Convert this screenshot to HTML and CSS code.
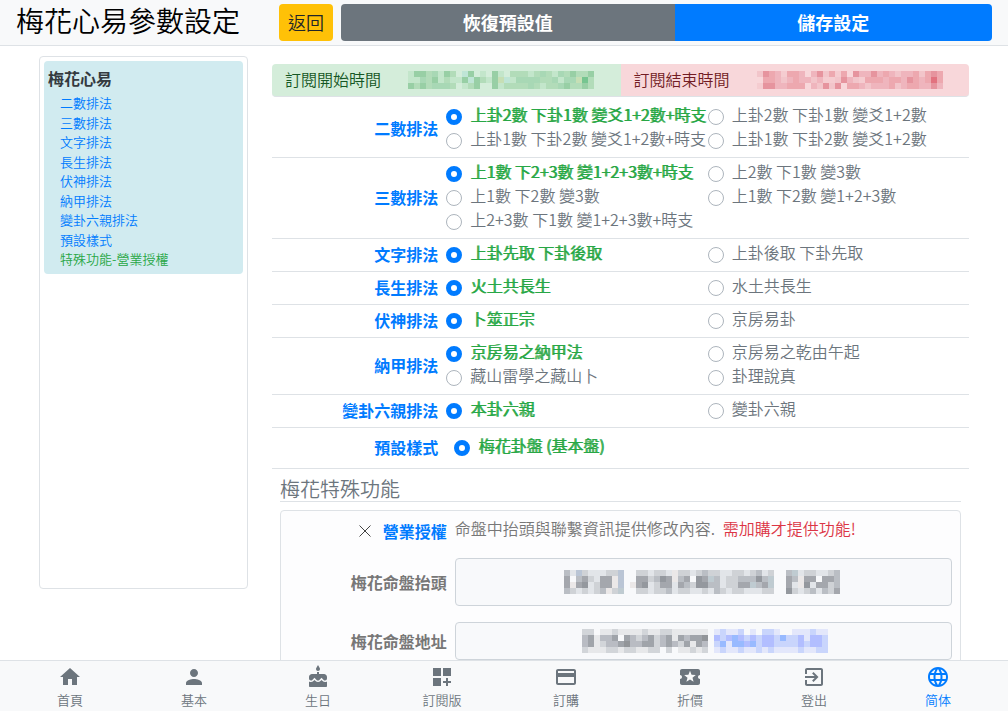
FILE: index.html
```html
<!DOCTYPE html>
<html lang="zh-Hant">
<head>
<meta charset="utf-8">
<meta name="viewport" content="width=device-width, initial-scale=1">
<title>梅花心易參數設定</title>
<link rel="stylesheet" href="styles.css">
</head>
<body>
<header class="topbar">
  <h1 class="topbar-title">梅花心易參數設定</h1>
  <button class="btn btn-back" type="button">返回</button>
  <div class="btn-group">
    <button class="btn btn-reset" type="button">恢復預設值</button>
    <button class="btn btn-save" type="submit" form="settings">儲存設定</button>
  </div>
</header>

<div class="page">
  <aside class="sidebar">
    <nav class="toc" aria-label="梅花心易">
      <h2 class="toc-title">梅花心易</h2>
      <a class="toc-link" href="#two">二數排法</a>
      <a class="toc-link" href="#three">三數排法</a>
      <a class="toc-link" href="#text">文字排法</a>
      <a class="toc-link" href="#growth">長生排法</a>
      <a class="toc-link" href="#hidden">伏神排法</a>
      <a class="toc-link" href="#najia">納甲排法</a>
      <a class="toc-link" href="#kin">變卦六親排法</a>
      <a class="toc-link" href="#style">預設樣式</a>
      <a class="toc-link toc-special" href="#special">特殊功能-營業授權</a>
    </nav>
  </aside>

  <main class="content">
    <div class="period">
      <div class="period-cell period-start"><span>訂閱開始時間</span><svg class="mosaic" data-mosaic="start"></svg></div>
      <div class="period-cell period-end"><span>訂閱結束時間</span><svg class="mosaic" data-mosaic="end"></svg></div>
    </div>

    <form id="settings">
      <fieldset class="row" id="two" aria-labelledby="two-l">
        <div class="row-label" id="two-l">二數排法</div>
        <div class="options">
          <label class="option"><input type="radio" name="two" checked><span>上卦2數 下卦1數 變爻1+2數+時支</span></label>
          <label class="option"><input type="radio" name="two"><span>上卦2數 下卦1數 變爻1+2數</span></label>
          <label class="option"><input type="radio" name="two"><span>上卦1數 下卦2數 變爻1+2數+時支</span></label>
          <label class="option"><input type="radio" name="two"><span>上卦1數 下卦2數 變爻1+2數</span></label>
        </div>
      </fieldset>
      <fieldset class="row" id="three" aria-labelledby="three-l">
        <div class="row-label" id="three-l">三數排法</div>
        <div class="options">
          <label class="option"><input type="radio" name="three" checked><span>上1數 下2+3數 變1+2+3數+時支</span></label>
          <label class="option"><input type="radio" name="three"><span>上2數 下1數 變3數</span></label>
          <label class="option"><input type="radio" name="three"><span>上1數 下2數 變3數</span></label>
          <label class="option"><input type="radio" name="three"><span>上1數 下2數 變1+2+3數</span></label>
          <label class="option"><input type="radio" name="three"><span>上2+3數 下1數 變1+2+3數+時支</span></label>
        </div>
      </fieldset>
      <fieldset class="row" id="text" aria-labelledby="text-l">
        <div class="row-label" id="text-l">文字排法</div>
        <div class="options">
          <label class="option"><input type="radio" name="text" checked><span>上卦先取 下卦後取</span></label>
          <label class="option"><input type="radio" name="text"><span>上卦後取 下卦先取</span></label>
        </div>
      </fieldset>
      <fieldset class="row" id="growth" aria-labelledby="growth-l">
        <div class="row-label" id="growth-l">長生排法</div>
        <div class="options">
          <label class="option"><input type="radio" name="growth" checked><span>火土共長生</span></label>
          <label class="option"><input type="radio" name="growth"><span>水土共長生</span></label>
        </div>
      </fieldset>
      <fieldset class="row" id="hidden" aria-labelledby="hidden-l">
        <div class="row-label" id="hidden-l">伏神排法</div>
        <div class="options">
          <label class="option"><input type="radio" name="hidden" checked><span>卜筮正宗</span></label>
          <label class="option"><input type="radio" name="hidden"><span>京房易卦</span></label>
        </div>
      </fieldset>
      <fieldset class="row" id="najia" aria-labelledby="najia-l">
        <div class="row-label" id="najia-l">納甲排法</div>
        <div class="options">
          <label class="option"><input type="radio" name="najia" checked><span>京房易之納甲法</span></label>
          <label class="option"><input type="radio" name="najia"><span>京房易之乾由午起</span></label>
          <label class="option"><input type="radio" name="najia"><span>藏山雷學之藏山卜</span></label>
          <label class="option"><input type="radio" name="najia"><span>卦理說真</span></label>
        </div>
      </fieldset>
      <fieldset class="row" id="kin" aria-labelledby="kin-l">
        <div class="row-label" id="kin-l">變卦六親排法</div>
        <div class="options">
          <label class="option"><input type="radio" name="kin" checked><span>本卦六親</span></label>
          <label class="option"><input type="radio" name="kin"><span>變卦六親</span></label>
        </div>
      </fieldset>
      <fieldset class="row row-roomy" id="style" aria-labelledby="style-l">
        <div class="row-label" id="style-l">預設樣式</div>
        <div class="options">
          <label class="option"><input type="radio" name="style" checked><span>梅花卦盤 (基本盤)</span></label>
        </div>
      </fieldset>

      <section class="special" id="special">
        <h2 class="special-title">梅花特殊功能</h2>
        <div class="panel">
          <div class="panel-row">
            <div class="panel-label panel-feature">
              <svg class="cross" viewBox="0 0 12 12" aria-hidden="true"><path d="M0.500 0.500L11.500 11.500M11.500 0.500L0.500 11.500"/></svg>
              <span>營業授權</span>
            </div>
            <p class="panel-text">命盤中抬頭與聯繫資訊提供修改內容. <span class="warn">需加購才提供功能!</span></p>
          </div>
          <div class="panel-row">
            <label class="panel-label" for="chart-head">梅花命盤抬頭</label>
            <div class="field"><input class="field-input field-large" id="chart-head" type="text" readonly><svg class="mosaic" data-mosaic="head"></svg></div>
          </div>
          <div class="panel-row">
            <label class="panel-label" for="chart-address">梅花命盤地址</label>
            <div class="field"><input class="field-input" id="chart-address" type="text" readonly><svg class="mosaic" data-mosaic="address"></svg></div>
          </div>
        </div>
      </section>
    </form>
  </main>
</div>

<nav class="tabbar">
  <a class="tab" href="#home"><svg viewBox="0 0 24 24"><path d="M10 20v-6h4v6h5v-8h3L12 3 2 12h3v8z"/></svg>首頁</a>
  <a class="tab" href="#basic"><svg viewBox="0 0 24 24"><path d="M12 12c2.210 0 4-1.790 4-4s-1.790-4-4-4-4 1.790-4 4 1.790 4 4 4zm0 2c-2.670 0-8 1.340-8 4v2h16v-2c0-2.660-5.330-4-8-4z"/></svg>基本</a>
  <a class="tab" href="#birthday"><svg viewBox="0 0 24 24"><path d="M12 6c1.110 0 2-.9 2-2 0-.38-.1-.73-.29-1.030L12 0l-1.710 2.970c-.19.3-.29.65-.29 1.030 0 1.100.9 2 2 2zm4.600 9.990l-1.070-1.070-1.080 1.070c-1.300 1.300-3.580 1.310-4.890 0l-1.070-1.070-1.090 1.070C6.750 16.640 5.880 17 4.960 17c-.73 0-1.400-.23-1.960-.61V21c0 .55.45 1 1 1h16c.55 0 1-.45 1-1v-4.610c-.56.38-1.230.61-1.960.61-.92 0-1.790-.36-2.440-1.010zM18 9h-5V7h-2v2H6c-1.660 0-3 1.340-3 3v1.540c0 1.080.88 1.960 1.960 1.960.52 0 1.020-.2 1.380-.57l2.140-2.130 2.130 2.130c.74.74 2.030.74 2.770 0l2.140-2.130 2.130 2.130c.37.37.86.57 1.380.57 1.080 0 1.960-.88 1.960-1.960V12C21 10.340 19.660 9 18 9z"/></svg>生日</a>
  <a class="tab" href="#editions"><svg viewBox="0 0 24 24"><path d="M3 3h8v8H3zM13 3h8v8h-8zM3 13h8v8H3zM18 13h-2v3h-3v2h3v3h2v-3h3v-2h-3z"/></svg>訂閱版</a>
  <a class="tab" href="#purchase"><svg viewBox="0 0 24 24"><path d="M20 4H4c-1.110 0-1.990.89-1.990 2L2 18c0 1.110.89 2 2 2h16c1.110 0 2-.89 2-2V6c0-1.110-.89-2-2-2zm0 14H4v-6h16v6zm0-10H4V6h16v2z"/></svg>訂購</a>
  <a class="tab" href="#discount"><svg viewBox="0 0 24 24"><path d="M20 12c0-1.100.9-2 2-2V6c0-1.100-.9-2-2-2H4c-1.100 0-1.990.9-1.990 2v4c1.100 0 1.990.9 1.990 2s-.89 2-2 2v4c0 1.100.9 2 2 2h16c1.100 0 2-.9 2-2v-4c-1.100 0-2-.9-2-2zm-4.420 4.800L12 14.500l-3.580 2.300 1.080-4.120-3.290-2.690 4.240-.25L12 5.800l1.540 3.950 4.240.25-3.290 2.690 1.090 4.110z"/></svg>折價</a>
  <a class="tab" href="#logout"><svg viewBox="0 0 24 24"><path d="M10.090 15.590L11.500 17l5-5-5-5-1.410 1.410L12.670 11H3v2h9.670l-2.580 2.590zM19 3H5c-1.110 0-2 .9-2 2v4h2V5h14v14H5v-4H3v4c0 1.100.89 2 2 2h14c1.100 0 2-.9 2-2V5c0-1.100-.9-2-2-2z"/></svg>登出</a>
  <a class="tab tab-lang" href="#lang" lang="zh-Hans"><svg viewBox="0 0 24 24"><path d="M11.990 2C6.470 2 2 6.480 2 12s4.470 10 9.990 10C17.520 22 22 17.520 22 12S17.520 2 11.990 2zm6.930 6h-2.950c-.32-1.250-.78-2.450-1.380-3.560 1.840.63 3.370 1.910 4.330 3.560zM12 4.040c.83 1.200 1.480 2.530 1.910 3.960h-3.820c.43-1.430 1.080-2.760 1.910-3.960zM4.260 14C4.100 13.360 4 12.690 4 12s.1-1.360.26-2h3.380c-.08.66-.14 1.320-.14 2 0 .68.060 1.340.14 2H4.260zm.82 2h2.950c.32 1.250.78 2.450 1.380 3.560-1.840-.63-3.370-1.900-4.330-3.560zm2.950-8H5.080c.96-1.660 2.490-2.930 4.330-3.560C8.810 5.550 8.350 6.750 8.030 8zM12 19.960c-.83-1.200-1.480-2.530-1.910-3.960h3.820c-.43 1.430-1.080 2.760-1.910 3.960zM14.340 14H9.660c-.09-.66-.16-1.320-.16-2 0-.68.070-1.350.16-2h4.680c.09.65.16 1.320.16 2 0 .68-.07 1.340-.16 2zm.25 5.560c.6-1.110 1.060-2.310 1.380-3.560h2.950c-.96 1.650-2.490 2.930-4.330 3.560zM16.360 14c.08-.66.14-1.320.14-2 0-.68-.06-1.340-.14-2h3.380c.16.64.26 1.310.26 2s-.1 1.360-.26 2h-3.380z"/></svg>简体</a>
</nav>
<script src="mosaic.js"></script>
</body>
</html>
```
FILE: styles.css
```css
*, *::before, *::after { box-sizing: border-box; }

body {
  margin: 0;
  height: 100vh;
  display: flex;
  flex-direction: column;
  font-family: "Noto Sans CJK TC", "Noto Sans CJK SC", sans-serif;
  font-size: 16px;
  font-weight: 350;
  line-height: 24px;
  color: #212529;
  background: #fff;
}

h1, h2, p { margin: 0; }
a { text-decoration: none; }

.topbar {
  flex: none;
  display: flex;
  align-items: flex-start;
  padding: 4px 16px;
  background: #f8f9fa;
  border-bottom: 1px solid #dee2e6;
}
.topbar-title {
  width: 255px;
  margin-right: 8px;
  font-size: 28px;
  font-weight: 350;
  line-height: 33px;
  color: #000;
}
.btn {
  height: 37px;
  padding: 0 9px;
  border: 0;
  font-family: inherit;
  font-size: 18px;
  font-weight: 700;
  line-height: 37px;
  color: #fff;
}
.btn-back {
  margin-right: 8px;
  border-radius: 4px;
  background: #ffc107;
  color: #212529;
  font-weight: 350;
}
.btn-group { flex: 1; display: flex; }
.btn-reset { flex: 334; background: #6c757d; border-radius: 4px 0 0 4px; }
.btn-save { flex: 317; background: #007bff; border-radius: 0 4px 4px 0; }

.page {
  flex: 1;
  min-height: 0;
  overflow: hidden;
  display: grid;
  grid-template-columns: 209px 1fr;
  gap: 24px;
  padding: 0 39px;
}
.sidebar {
  height: 75vh;
  margin-top: 10px;
  padding: 4px;
  border: 1px solid #dee2e6;
  border-radius: 4px;
}
.toc {
  display: flex;
  flex-direction: column;
  padding: 5px 4px 5px;
  border-radius: 4px;
  background: #d1ebf0;
}
.toc-title { margin-bottom: 3px; font-size: 16px; line-height: 24px; color: #343a40; }
.toc-link { padding-left: 12px; font-size: 13px; line-height: 1.5; color: #007bff; }
.toc-special { color: #28a745; }

.content { padding-top: 18px; }
.period { display: grid; grid-template-columns: 1fr 1fr; margin-bottom: 4px; }
.period-cell {
  display: flex;
  align-items: center;
  gap: 27px;
  height: 33px;
  padding-left: 13px;
  border-bottom: 1px solid #dee2e6;
}
.period-cell span { padding-bottom: 2px; }
.period-start { background: #d4edda; color: #155724; border-radius: 4px 0 0 4px; }
.period-end { background: #f8d7da; color: #721c24; border-radius: 0 4px 4px 0; }

.row {
  display: grid;
  grid-template-columns: 1fr 3fr;
  align-items: center;
  min-width: 0;
  margin: 0;
  padding: 4px 0;
  border: 0;
  border-bottom: 1px solid #dee2e6;
}
.row-label {
  padding: 0 8px 2px 0;
  line-height: 22px;
  text-align: right;
  font-weight: 700;
  color: #007bff;
}
.options { display: grid; grid-template-columns: repeat(2, minmax(0, 1fr)); }
.option {
  display: flex;
  align-items: center;
  gap: 8px;
  white-space: nowrap;
  color: #6c757d;
}
.option span { padding-bottom: 6px; line-height: 18px; }
.option input {
  appearance: none;
  flex: none;
  width: 16px;
  height: 16px;
  margin: 0;
  border: 1px solid #adb5bd;
  border-radius: 50%;
  background: #fff;
}
.option input:checked { border: 5px solid #007bff; }
.option input:checked + span { color: #28a745; text-shadow: 1px 0 currentColor; }
.row-roomy { padding: 8px 0; }
.row-roomy .options { padding-left: 8px; }

.special { padding: 8px 8px 0; }
.special-title {
  margin-bottom: 8px;
  border-bottom: 1px solid #dee2e6;
  font-size: 20px;
  font-weight: 350;
  line-height: 24px;
  color: #6c757d;
}
.panel {
  display: grid;
  gap: 16px;
  padding: 7px 8px 8px;
  border: 1px solid #dee2e6;
  border-radius: 4px;
  background: #fdfdfe;
  color: #777;
}
.panel-row {
  display: grid;
  grid-template-columns: 1fr 3fr;
  align-items: center;
}
.panel-label { padding-right: 8px; text-align: right; font-weight: 700; }
.panel-feature {
  display: flex;
  justify-content: flex-end;
  align-items: center;
  gap: 12px;
  padding-top: 2px;
  line-height: 22px;
  color: #007bff;
}
.panel-text { padding-bottom: 4px; line-height: 20px; }
.cross { width: 12px; height: 12px; fill: none; stroke: #444; stroke-width: 1; }
.warn { margin-left: 4px; color: #dc3545; }
.field { position: relative; }
.field-input {
  display: block;
  width: 100%;
  height: 38px;
  border: 1px solid #ced4da;
  border-radius: 4px;
  background: #f8f9fb;
}
.field-large { height: 48px; }
.field .mosaic { position: absolute; inset: 0 0 0 4px; margin: auto; }

.tabbar {
  flex: none;
  display: grid;
  grid-template-columns: repeat(8, 1fr);
  padding: 4px 8px 0;
  border-top: 1px solid #dee2e6;
  background: #f8f9fa;
}
.tab {
  display: flex;
  flex-direction: column;
  align-items: center;
  font-size: 13px;
  line-height: 22px;
  color: #6c757d;
}
.tab svg { width: 24px; height: 24px; fill: currentColor; }
.tab-lang { color: #007bff; }
```
FILE: mosaic.js
```js
// Pixelated cover for private values; each character picks a block colour.
const covers = {
  start: {
    colors: { a: "#c3e6cb", b: "#b2dcb9", c: "#a8d8b5", d: "#98cfa5", e: "#76c590", f: "#bfe5d6", g: "#c6dfb5" },
    rows: [
      "addbcadb.fd.a.da.bbbabcbacbdbbd",
      "aacbdabaadfdbadgfaccccbbcaccgeb",
      "dbdbcccb.abd..dabbbbcbabbcdbbdb"
    ]
  },
  end: {
    colors: { a: "#f2c5ca", b: "#efb5bd", c: "#eda8af", d: "#e6949e", e: "#e2727f", f: "#f5ccd0" },
    rows: [
      "adcbfccb.bdacfc.dbbdbcbabbcacdc",
      ".ccbabcbbabffadbafcccbccbdcbcec",
      "fddbbccc.badad.ccbabbbcabccbbdb"
    ]
  },
  head: {
    colors: { a: "#e2e5e9", b: "#cfd2d6", c: "#babec4", d: "#a4a7ad", e: "#94989e", f: "#ebe8e8", g: "#bac5d5", h: "#bfcbd1" },
    rows: [
      "cagbaaabbg..bbabbafbbabcbbaabbabcab..chabbaabc.",
      "d.cdbaddfg..ddbcedfcd.edhcabbcccech..dcfdd.ddc.",
      "dfdeabddfg.fdeabddadcbeeccabbddhcdh..dafeaddbc.",
      "cbababcfbh..bbabbcabbaabacbabbaaabb..ebabcacbd."
    ]
  },
  address: {
    colors: { a: "#e7e8ea", b: "#d2d5d9", c: "#b9bcc3", d: "#a0a4aa", e: "#929599", i: "#e3e7fb", j: "#c9d5fc", k: "#b2beff", l: "#98baff", m: "#ced3ff" },
    rows: [
      "bb.aabaaaabaabbaaaaaa.ijiij.i.jji..iiijii",
      "cdaccd.dcbcdbcdadcdde.kjklkjkjkkjljjkikkj",
      "cdabccdeccddbcdcbdadc.jlillkljkkjjjjkjkkj",
      "baaabbabbaabb.b.aabab.ijiijiijijiiiijiijj"
    ]
  }
};

for (const svg of document.querySelectorAll("[data-mosaic]")) {
  const { colors, rows } = covers[svg.dataset.mosaic];
  const width = Math.max(...rows.map(row => row.length)) * 6;
  svg.setAttribute("width", width);
  svg.setAttribute("height", rows.length * 6);
  svg.setAttribute("shape-rendering", "crispEdges");
  rows.forEach((row, y) => [...row].forEach((key, x) => {
    if (!colors[key]) return;
    const block = document.createElementNS("http://www.w3.org/2000/svg", "rect");
    block.setAttribute("x", x * 6);
    block.setAttribute("y", y * 6);
    block.setAttribute("width", 6);
    block.setAttribute("height", 6);
    block.setAttribute("fill", colors[key]);
    svg.append(block);
  }));
}
```
